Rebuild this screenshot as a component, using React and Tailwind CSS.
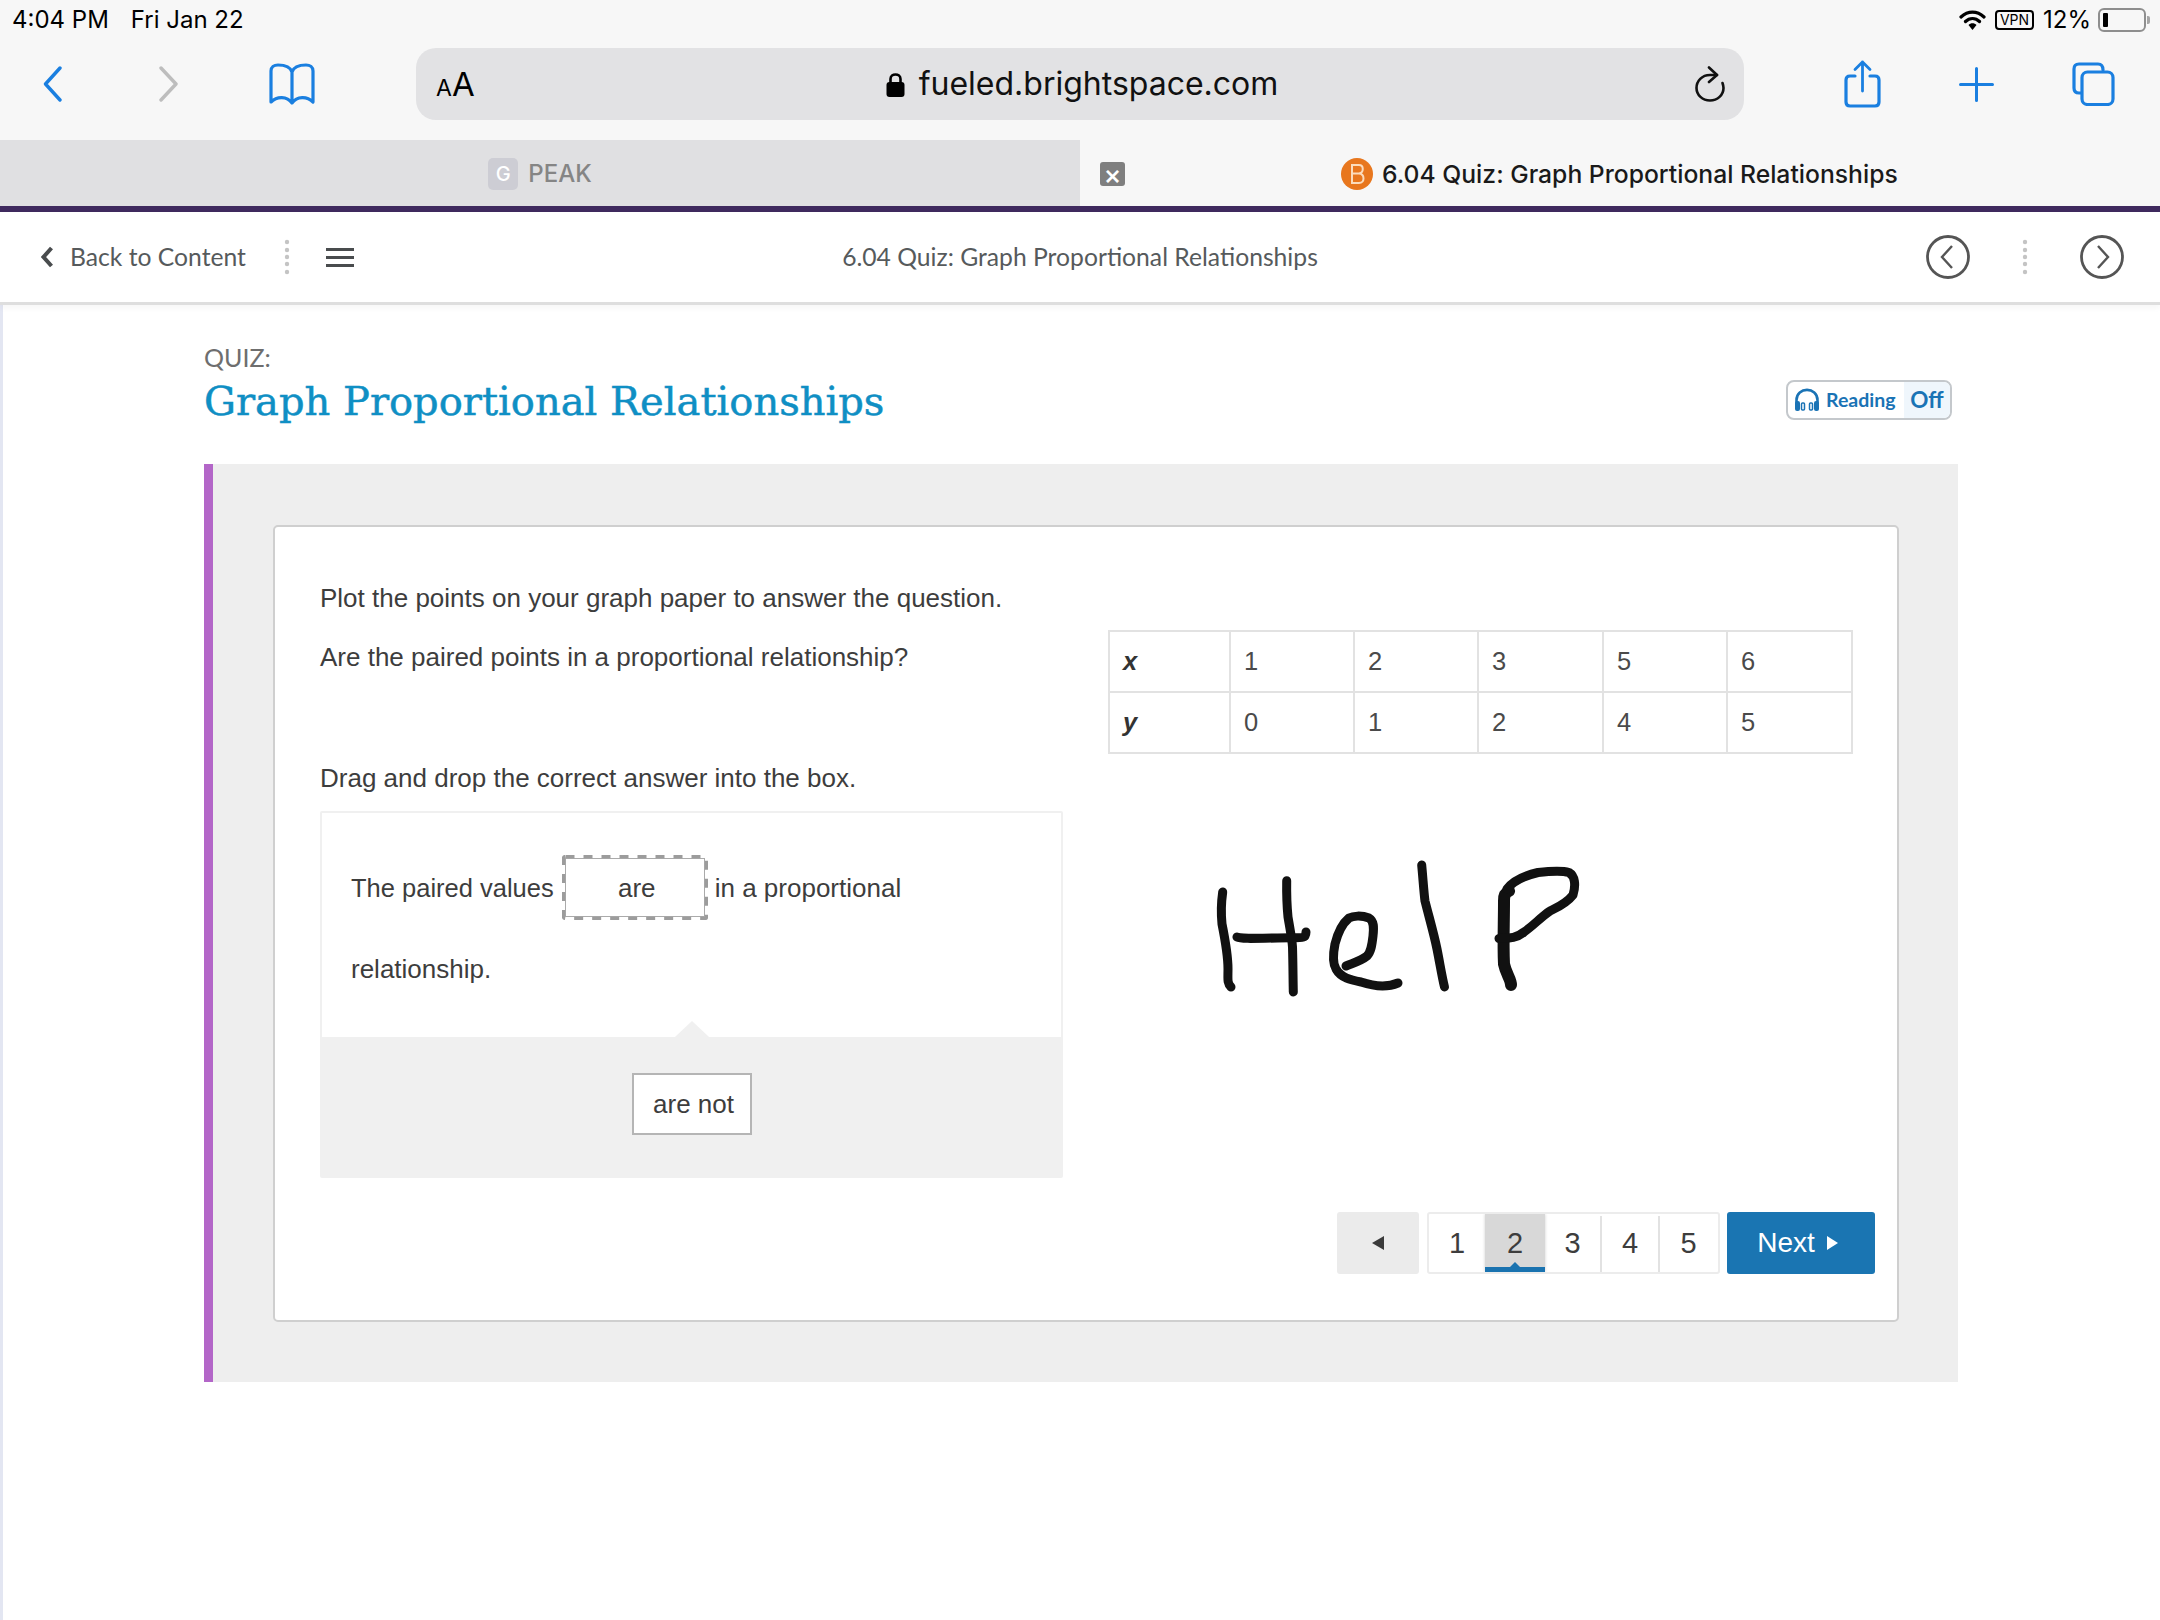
const blue = "#1a7fe0";

function Dots() {
  return (
    <svg width="6" height="36" viewBox="0 0 6 36" className="shrink-0">
      {[3, 11, 18, 25, 33].map((y) => (
        <circle key={y} cx="3" cy={y} r="2.2" fill="#c4c4c4" />
      ))}
    </svg>
  );
}

function Circle({ dir }) {
  return (
    <svg width="44" height="44" viewBox="0 0 44 44" className="shrink-0">
      <circle cx="22" cy="22" r="20.5" fill="none" stroke="#555" strokeWidth="2.8" />
      <path d={dir === "l" ? "M26 11 L16 22 L26 33" : "M18 11 L28 22 L18 33"} fill="none" stroke="#555" strokeWidth="2.4" />
    </svg>
  );
}

function Help() {
  const s = { fill: "none", stroke: "#111", strokeWidth: 9, strokeLinecap: "round", strokeLinejoin: "round" };
  return (
    <svg width="440" height="170" viewBox="0 0 440 170" className="mt-[85px] ml-[73px]">
      <path {...s} d="M41.7 53 C40 65 40 75 41 85 C44 100 47 115 47 130 C47 140 46 144 50 148" />
      <path {...s} d="M105.7 41.7 C105.5 55 106 68 107 78 C109 90 111 100 111.5 108 C112 125 112 140 112.3 153" />
      <path {...s} d="M56 98 C60 100 70 99.5 110 98.7 C118 98.5 123 99 124 97 C125 95 125 94 125 93" />
      <path {...s} d="M165 127 C172 124 180 122 186 117 C190 113 191 106 192 97 C193 88 193 82 188 79 C180 76 172 77 168 79 C162 84 157 93 154 105 C152 115 152 125 155 130 C160 139 170 141 180 143 C192 147 205 149 217 144" />
      <path {...s} d="M240.7 26 C242 40 243 55 244 62 C248 78 253 95 256 110 C259 125 261 138 263.5 148" />
      <path {...s} strokeWidth="12" d="M328 52 C324 54 323 56 323 62 C323 85 322 105 323 125 C325 135 330 140 330 146" />
      <path {...s} d="M326 50 C332 42 342 37 357 33.5 C370 32 383 32 388 33.5 C394 37 395 46 392 56 C385 65 375 69 369 72 C360 78 352 87 343 93 C335 100 325 99 318 99.5" />
    </svg>
  );
}

function Toolbar() {
  const ic = { fill: "none", stroke: blue, strokeLinecap: "round", strokeLinejoin: "round" };
  return (
    <div className="flex h-[100px] items-center pb-[12px]">
      <svg width="19" height="36" viewBox="0 0 19 36" className="ml-[43px] shrink-0">
        <path {...ic} strokeWidth="3.4" d="M17 2 L2.5 18 L17 34" />
      </svg>
      <svg width="21" height="36" viewBox="0 0 21 36" className="ml-[96px] shrink-0">
        <path fill="none" stroke="#bdbdbd" strokeWidth="3.4" strokeLinecap="round" strokeLinejoin="round" d="M3 2 L18 18 L3 34" />
      </svg>
      <svg width="46" height="42" viewBox="0 0 46 42" className="ml-[90px] shrink-0">
        <path {...ic} strokeWidth="3.2" d="M23 9 C21 3 15 2 9 2 C5 2 2 4 2 8 L2 39 C8 33 18 33 23 40 C28 33 38 33 44 39 L44 8 C44 4 41 2 37 2 C31 2 25 3 23 9 Z M23 9 L23 40" />
      </svg>
      <div className="ml-[101px] flex h-[72px] w-[1328px] shrink-0 items-center justify-between rounded-[20px] bg-[#e2e2e4] pl-[20px] pr-[19px]">
        <div className="flex w-[40px] items-baseline font-['Inter','Liberation_Sans',sans-serif] text-black">
          <span className="text-[23px] leading-none">A</span>
          <span className="text-[33px] leading-none">A</span>
        </div>
        <div className="mr-[7px] flex items-center gap-[14px]">
          <svg width="19" height="25" viewBox="0 0 19 25" className="shrink-0">
            <path d="M4.5 11 V7 C4.5 1 14.5 1 14.5 7 V11" fill="none" stroke="#000" strokeWidth="2.6" />
            <rect x="0.5" y="10" width="18" height="15" rx="3" fill="#000" />
          </svg>
          <span className="font-['Inter','Liberation_Sans',sans-serif] text-[32px] leading-none text-[#111]">fueled.brightspace.com</span>
        </div>
        <svg width="30" height="36" viewBox="0 0 30 36" className="shrink-0">
          <path d="M22 9 H15 C7 9 1.5 15 1.5 22 C1.5 29 7.5 34.5 15 34.5 C22.5 34.5 28.5 29 28.5 22 C28.5 20 28 18.5 27.5 17" fill="none" stroke="#111" strokeWidth="2.6" strokeLinecap="round" />
          <path d="M14 1.5 L22 9 L14 16" fill="none" stroke="#111" strokeWidth="2.6" strokeLinecap="round" strokeLinejoin="round" />
        </svg>
      </div>
      <svg width="37" height="48" viewBox="0 0 37 48" className="ml-[100px] shrink-0">
        <path {...ic} strokeWidth="3.2" d="M11 16 L6 16 C3.5 16 2 17.5 2 20 L2 42 C2 44.5 3.5 46 6 46 L31 46 C33.5 46 35 44.5 35 42 L35 20 C35 17.5 33.5 16 31 16 L26 16" />
        <path {...ic} strokeWidth="2.8" d="M18.5 31 L18.5 2 M11 9.5 L18.5 2 L26 9.5" />
      </svg>
      <svg width="35" height="35" viewBox="0 0 35 35" className="ml-[78px] shrink-0">
        <path {...ic} strokeWidth="3" d="M17.5 1.5 L17.5 33.5 M1.5 17.5 L33.5 17.5" />
      </svg>
      <svg width="43" height="44" viewBox="0 0 43 44" className="ml-[78px] shrink-0">
        <path {...ic} strokeWidth="3.2" d="M9 31 L7 31 C3.5 31 2 29 2 26 L2 7 C2 4 3.5 2 7 2 L26 2 C29 2 31 4 31 8" />
        <rect {...ic} strokeWidth="3.2" x="10" y="10" width="31" height="32.5" rx="5.5" />
      </svg>
    </div>
  );
}

function StatusBar() {
  return (
    <div className="flex h-[40px] items-center justify-between pl-[12px] pr-[10px] font-['Inter','Liberation_Sans',sans-serif] text-black">
      <div className="flex gap-[22px] text-[24px] leading-none">
        <span>4:04 PM</span>
        <span>Fri Jan 22</span>
      </div>
      <div className="flex items-center">
        <svg width="27" height="20" viewBox="0 0 27 20" className="shrink-0">
          <path d="M2 7 C9 0.5 18 0.5 25 7 M6.5 11.5 C10.5 7.5 16.5 7.5 20.5 11.5" fill="none" stroke="#000" strokeWidth="3.2" strokeLinecap="round" />
          <path d="M9.5 15 C11.5 12.5 15.5 12.5 17.5 15 L13.5 20 Z" fill="#000" />
        </svg>
        <div className="ml-[9px] flex h-[20px] w-[39px] items-center justify-center rounded-[4px] border-2 border-black text-[14px] leading-none">VPN</div>
        <span className="ml-[9px] text-[24px] leading-none">12%</span>
        <div className="ml-[7px] flex h-[24px] w-[48px] items-center rounded-[6px] border-2 border-[#8e8e8e] px-[3px]">
          <div className="h-[14px] w-[5px] rounded-[1px] bg-black" />
        </div>
        <div className="ml-[1px] h-[8px] w-[3px] rounded-r-[2px] bg-[#a5a5a5]" />
      </div>
    </div>
  );
}

function Tabs() {
  return (
    <div className="flex h-[66px] font-['Inter','Liberation_Sans',sans-serif]">
      <div className="flex w-[1080px] items-center justify-center gap-[10px] bg-[#e0e0e2] pt-[2px]">
        <div className="flex h-[32px] w-[30px] items-center justify-center rounded-[5px] bg-[#cdcdd4] text-[20px] font-medium leading-none text-white">G</div>
        <span className="text-[24px] font-medium leading-none text-[#858585]">PEAK</span>
      </div>
      <div className="flex flex-1 items-center pl-[20px] pt-[2px]">
        <div className="flex h-[24px] w-[25px] items-center justify-center rounded-[3px] bg-[#7f7f7f] text-[27px] font-medium leading-none text-white">×</div>
        <svg width="32" height="32" viewBox="0 0 32 32" className="ml-[216px] shrink-0">
          <circle cx="16" cy="16" r="16" fill="#e8771e" />
          <path d="M11 7 H18 C23 7 23 15 18 15.5 C24 16 24 25 18 25 H11 Z M11 15.5 H18" fill="none" stroke="#fbdcbc" strokeWidth="2" />
        </svg>
        <span className="ml-[9px] text-[24.7px] font-medium leading-none text-[#1a1a1a]">6.04 Quiz: Graph Proportional Relationships</span>
      </div>
    </div>
  );
}

function Header() {
  return (
    <div className="relative grid h-[93px] grid-cols-[1fr_auto_1fr] items-center border-b-[3px] border-[#dedede] bg-white font-['Lato',sans-serif] text-[24.7px] text-[#565a5c] shadow-[0_3px_6px_rgba(0,0,0,0.04)]">
      <div className="flex items-center">
        <svg width="13" height="22" viewBox="0 0 13 22" className="ml-[41px] shrink-0">
          <path d="M10.5 2 L2.5 11 L10.5 20" fill="none" stroke="#494c4e" strokeWidth="4" />
        </svg>
        <span className="ml-[16px] leading-none">Back to Content</span>
        <div className="ml-[38px]"><Dots /></div>
        <div className="ml-[36px] flex w-[28px] flex-col gap-[5px]">
          <div className="h-[3px] bg-[#494c4e]" />
          <div className="h-[3px] bg-[#494c4e]" />
          <div className="h-[3px] bg-[#494c4e]" />
        </div>
      </div>
      <span className="leading-none">6.04 Quiz: Graph Proportional Relationships</span>
      <div className="flex items-center justify-end pr-[36px]">
        <Circle dir="l" />
        <div className="mx-[52px]"><Dots /></div>
        <Circle dir="r" />
      </div>
    </div>
  );
}

function Reading() {
  return (
    <div className="-mt-[2px] flex h-[40px] w-[166px] items-stretch overflow-hidden rounded-[8px] border-2 border-[#c4c8cc] font-['Lato',sans-serif] text-[#1a73b5]">
      <div className="flex flex-1 items-center gap-[6px] pl-[6px]">
        <svg width="26" height="24" viewBox="0 0 26 24" className="shrink-0">
          <path d="M2.5 16 V12 C2.5 -1.5 23.5 -1.5 23.5 12 V16" fill="none" stroke="#1a73b5" strokeWidth="2.6" />
          <rect x="1" y="13" width="5" height="10" rx="2" fill="#1a73b5" />
          <rect x="20" y="13" width="5" height="10" rx="2" fill="#1a73b5" />
          <rect x="7.5" y="15" width="3" height="7" rx="1" fill="none" stroke="#1a73b5" strokeWidth="1.5" />
          <rect x="15.5" y="15" width="3" height="7" rx="1" fill="none" stroke="#1a73b5" strokeWidth="1.5" />
        </svg>
        <span className="text-[19.5px] font-bold leading-none">Reading</span>
      </div>
      <div className="flex w-[46px] items-center justify-center bg-[#eff6fc] text-[22.5px] font-bold leading-none">Off</div>
    </div>
  );
}

function DataTable() {
  const rows = [["x", "1", "2", "3", "5", "6"], ["y", "0", "1", "2", "4", "5"]];
  const widths = ["w-[121px]", "w-[124px]", "w-[124px]", "w-[125px]", "w-[124px]", "w-[125px]"];
  return (
    <table className="w-[743px] table-fixed border-collapse text-[25.5px] text-[#4a4a4a]">
      <tbody>
        {rows.map((r) => (
          <tr key={r[0]} className="h-[61px]">
            {r.map((c, i) => (
              <td key={i} className={`${widths[i]} border-2 border-[#e2e2e2] pl-[13px] ${i === 0 ? "font-bold italic text-[#333]" : ""}`}>{c}</td>
            ))}
          </tr>
        ))}
      </tbody>
    </table>
  );
}

function Pager() {
  return (
    <div className="flex items-stretch justify-end pb-[46px] pr-[22px] text-[#3d3d3d]">
      <div className="flex h-[62px] w-[82px] items-center justify-center rounded-[3px] bg-[#ebebeb]">
        <svg width="12" height="14" viewBox="0 0 12 14"><path d="M12 0 V14 L0 7 Z" fill="#3a3a3a" /></svg>
      </div>
      <div className="ml-[8px] flex h-[62px] w-[293px] overflow-hidden rounded-[3px] border-2 border-[#ececec] pr-[1px] pt-[2px] text-[29px]">
        <div className="flex w-[56px] items-center justify-center">1</div>
        <div className="relative -mt-[2px] flex w-[60px] items-center justify-center bg-[#d8d8d8] pt-[2px] shadow-[0_0_3px_#cfcfcf]">
          2
          <div className="absolute bottom-0 left-0 right-0 h-[5px] bg-[#1a73b0]" />
          <div className="absolute bottom-[3px] left-[23px] h-0 w-0 border-x-[7px] border-b-[7px] border-x-transparent border-b-[#1a73b0]" />
        </div>
        <div className="flex w-[57px] items-center justify-center border-r-2 border-[#e2e2e2]">3</div>
        <div className="flex w-[58px] items-center justify-center border-r-2 border-[#e2e2e2]">4</div>
        <div className="flex flex-1 items-center justify-center">5</div>
      </div>
      <div className="ml-[7px] flex h-[62px] w-[148px] items-center justify-center gap-[12px] rounded-[3px] bg-[#1a75b2] pr-[7px] text-[28px] text-white">
        <span>Next</span>
        <svg width="11" height="14" viewBox="0 0 11 14"><path d="M0 0 V14 L11 7 Z" fill="#fff" /></svg>
      </div>
    </div>
  );
}

function Activity() {
  return (
    <div className="mt-[15px] h-[367px] w-[743px] overflow-hidden rounded-[2px] border-2 border-[#f0f0f0] text-[#3d3d3d]">
      <div className="relative h-[224px] bg-white pl-[29px] pt-[42px]">
        <div className="flex h-[65px] items-center">
          <span className="text-[25.5px]">The paired values</span>
          <div className="relative ml-[8px] h-[65px] w-[146px] p-[3px]">
            <svg width="146" height="65" viewBox="0 0 146 65" className="absolute left-0 top-0">
              <rect x="1.5" y="1.5" width="143" height="62" rx="2" fill="none" stroke="#9c9c9c" strokeWidth="3.5" strokeDasharray="9 9" />
            </svg>
            <div className="flex h-full items-center justify-center border border-[#aaaaaa] pl-[4px]">are</div>
          </div>
          <span className="ml-[7px]">in a proportional</span>
        </div>
        <div className="mt-[31px] leading-[36px]">relationship.</div>
        <div className="absolute bottom-0 left-[353px] h-0 w-0 border-x-[17px] border-b-[16px] border-x-transparent border-b-[#f0f0f0]" />
      </div>
      <div className="flex h-[141px] items-start justify-center bg-[#f0f0f0] pt-[36px]">
        <div className="flex h-[62px] w-[120px] items-center justify-center border-2 border-[#b5b5b5] bg-white pl-[4px]">are not</div>
      </div>
    </div>
  );
}

export default function App() {
  return (
    <div className="flex h-[1620px] w-[2160px] flex-col overflow-hidden bg-white">
      <div className="h-[140px] bg-[#f7f7f7]">
        <StatusBar />
        <Toolbar />
      </div>
      <div className="bg-[#f7f7f7]"><Tabs /></div>
      <div className="h-[6px] bg-[#3f2a5e]" />
      <Header />
      <div className="flex-1 border-l-[3px] border-[#e3e6f2] pl-[201px] pt-[38px] font-['Liberation_Sans',sans-serif] text-[26px]">
        <div className="font-['Lato',sans-serif] text-[25px] leading-[28px] text-[#6e6e6e]">QUIZ:</div>
        <div className="mt-[2px] flex h-[56px] w-[1748px] items-center justify-between">
          <h1 className="font-['DejaVu_Serif',serif] text-[40px] font-normal leading-[56px] text-[#0f8fc4] [-webkit-text-stroke:0.5px_#0f8fc4]">Graph Proportional Relationships</h1>
          <Reading />
        </div>
        <div className="mt-[35px] flex h-[918px] w-[1754px] border-l-[9px] border-[#b366c8] bg-[#eeeeee] pl-[60px] pr-[59px] pt-[61px]">
          <div className="flex h-[797px] w-full flex-col justify-between rounded-[5px] border-2 border-[#cfcfcf] bg-white">
            <div className="flex pl-[45px] pt-[53px]">
              <div className="w-[743px] leading-[36px] text-[#3d3d3d]">
                <p>Plot the points on your graph paper to answer the question.</p>
                <p className="mt-[23px]">Are the paired points in a proportional relationship?</p>
                <p className="mt-[85px]">Drag and drop the correct answer into the box.</p>
                <Activity />
              </div>
              <div className="ml-[45px] w-[743px] pt-[50px]">
                <DataTable />
                <Help />
              </div>
            </div>
            <Pager />
          </div>
        </div>
      </div>
    </div>
  );
}
